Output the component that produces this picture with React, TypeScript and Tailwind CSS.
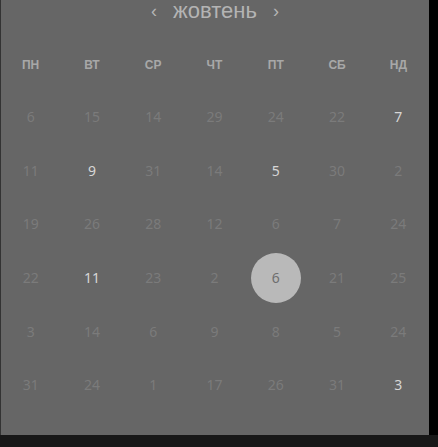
import React from "react";

const days = ["ПН", "ВТ", "СР", "ЧТ", "ПТ", "СБ", "НД"];
type Cell = { n: number; b?: boolean; s?: boolean };
const rows: Cell[][] = [
  [{ n: 6 }, { n: 15 }, { n: 14 }, { n: 29 }, { n: 24 }, { n: 22 }, { n: 7, b: true }],
  [{ n: 11 }, { n: 9, b: true }, { n: 31 }, { n: 14 }, { n: 5, b: true }, { n: 30 }, { n: 2 }],
  [{ n: 19 }, { n: 26 }, { n: 28 }, { n: 12 }, { n: 6 }, { n: 7 }, { n: 24 }],
  [{ n: 22 }, { n: 11, b: true }, { n: 23 }, { n: 2 }, { n: 6, s: true }, { n: 21 }, { n: 25 }],
  [{ n: 3 }, { n: 14 }, { n: 6 }, { n: 9 }, { n: 8 }, { n: 5 }, { n: 24 }],
  [{ n: 31 }, { n: 24 }, { n: 1 }, { n: 17 }, { n: 26 }, { n: 31 }, { n: 3, b: true }],
];

export default function App() {
  return (
    <div className="w-[438px] h-[447px] bg-[#181818] overflow-hidden" style={{ fontFamily: "'Liberation Sans', Arial, sans-serif" }}>
      <div className="flex h-[435px]">
        <div className="w-[429px] h-[435px] bg-[#666666] border-l border-[#333333] flex flex-col">
          <div className="h-[22px] flex items-center justify-center gap-[16px] text-[#b4b4b4]">
            <span className="text-[18px] leading-none">‹</span>
            <span className="text-[22px] leading-none">жовтень</span>
            <span className="text-[18px] leading-none">›</span>
          </div>
          <div className="grid grid-cols-7 mt-[32px] h-[22px] items-center -ml-px">
            {days.map((d) => (
              <div key={d} className="text-center text-[12px] font-bold text-[#a8a8a8]">{d}</div>
            ))}
          </div>
          <div className="flex flex-col mt-[14px] -ml-px">
            {rows.map((r, i) => (
              <div key={i} className="grid grid-cols-7 h-[53.6px] items-center">
                {r.map((c, j) => (
                  <div key={j} className="flex items-center justify-center" style={{ fontFamily: "'Noto Sans', sans-serif" }}>
                    {c.s ? (
                      <div className="w-[50px] h-[50px] rounded-full bg-[#b9b9b9] flex items-center justify-center text-[14px] text-[#6e6e6e]">{c.n}</div>
                    ) : (
                      <span className={"text-[14px] " + (c.b ? "text-[#d6d6d6]" : "text-[#7b7b7b]")}>{c.n}</span>
                    )}
                  </div>
                ))}
              </div>
            ))}
          </div>
        </div>
        <div className="w-[9px] h-[435px] bg-black" />
      </div>
    </div>
  );
}
